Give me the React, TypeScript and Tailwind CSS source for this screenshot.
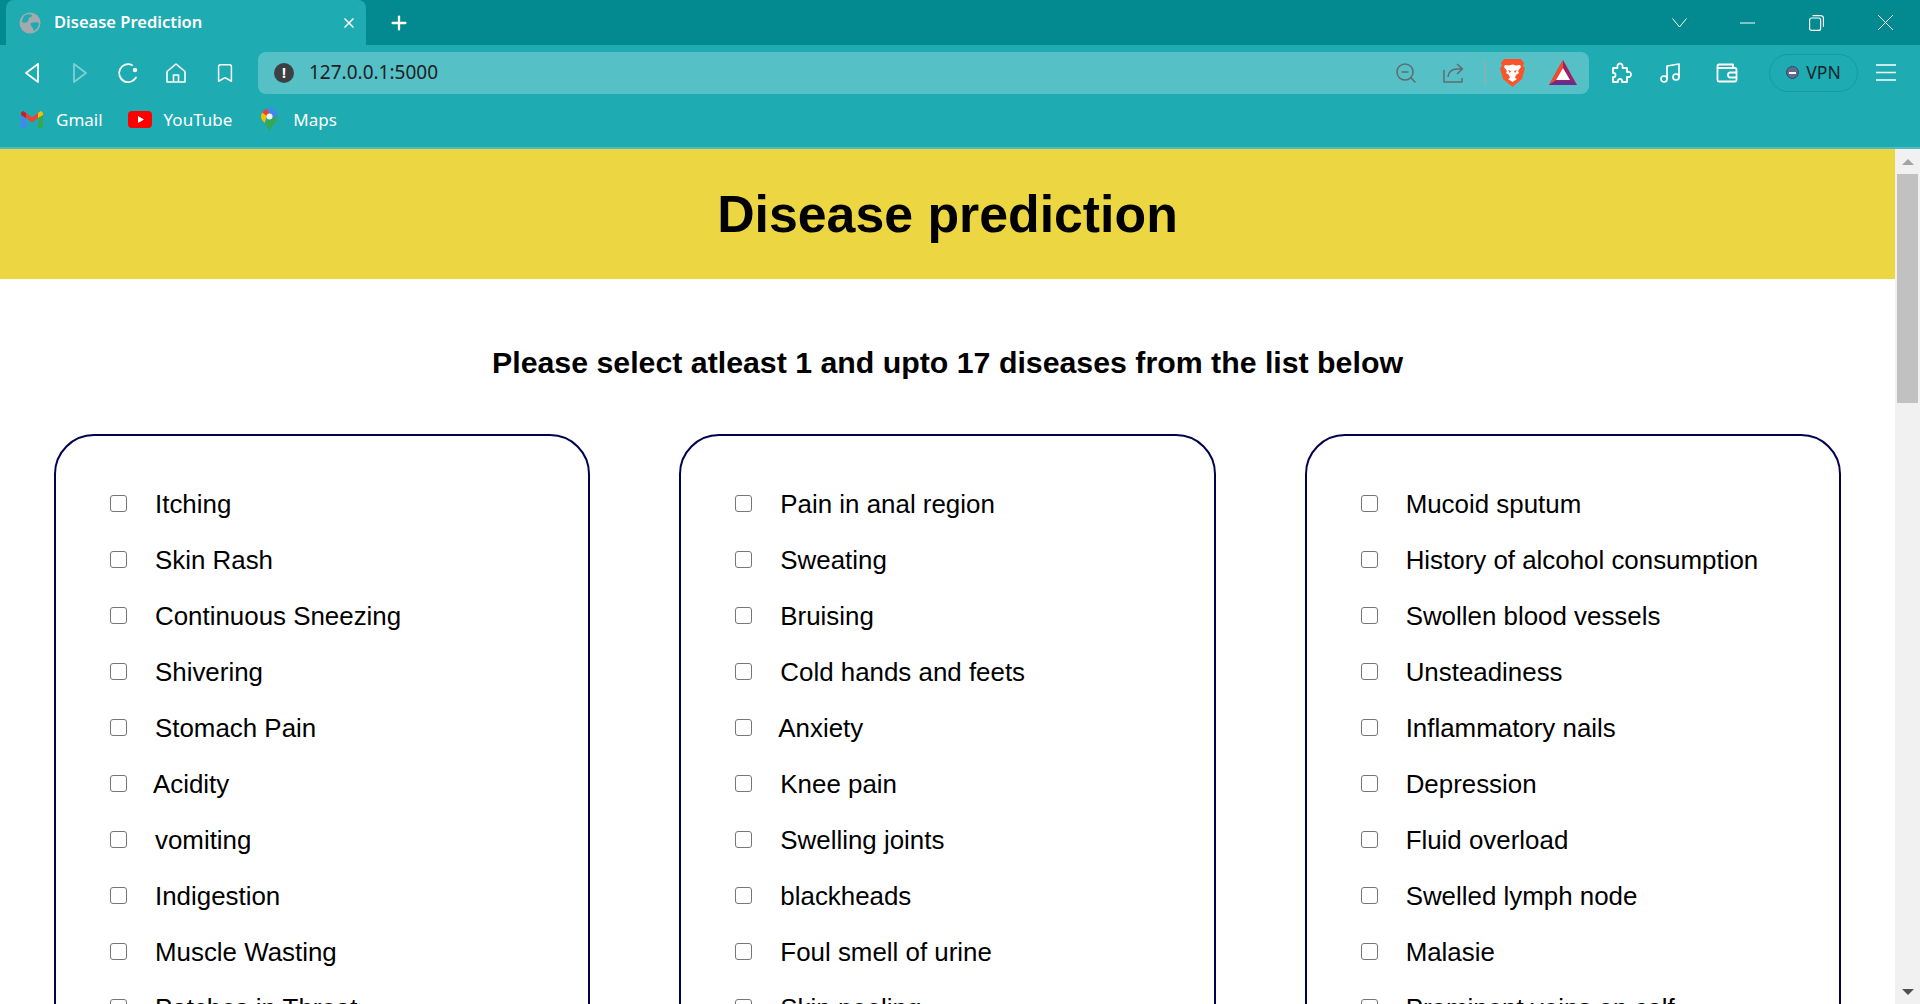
import React from "react";
import { Bookmark, Music, Plus, X, ZoomOut } from "lucide-react";

type Symptom = { label: string; nudge?: boolean };

const columns: Symptom[][] = [
  [
    { label: "Itching" },
    { label: "Skin Rash" },
    { label: "Continuous Sneezing" },
    { label: "Shivering" },
    { label: "Stomach Pain" },
    { label: "Acidity", nudge: true },
    { label: "vomiting" },
    { label: "Indigestion" },
    { label: "Muscle Wasting" },
    { label: "Patches in Throat" },
  ],
  [
    { label: "Pain in anal region" },
    { label: "Sweating" },
    { label: "Bruising" },
    { label: "Cold hands and feets" },
    { label: "Anxiety", nudge: true },
    { label: "Knee pain" },
    { label: "Swelling joints" },
    { label: "blackheads" },
    { label: "Foul smell of urine" },
    { label: "Skin peeling" },
  ],
  [
    { label: "Mucoid sputum" },
    { label: "History of alcohol consumption" },
    { label: "Swollen blood vessels" },
    { label: "Unsteadiness" },
    { label: "Inflammatory nails" },
    { label: "Depression" },
    { label: "Fluid overload" },
    { label: "Swelled lymph node" },
    { label: "Malasie" },
    { label: "Prominent veins on calf" },
  ],
];

function GlobeIcon() {
  return (
    <svg width="22" height="22" viewBox="0 0 22 22">
      <circle cx="11" cy="11" r="10.5" fill="#a3a9ae" />
      <path d="M5 4c3-2 6-2 8-1 0 2-2 2-3 3s0 3-2 4-3 1-5 0c0-2 1-4 2-6zM12 11c3-1 6-1 8 0 0 3-2 6-5 8-1-2-1-3-2-4s-2-3-1-4z" fill="#1eabb2" />
    </svg>
  );
}

function GmailIcon() {
  return (
    <svg width="22" height="17" viewBox="0 0 22 17">
      <path d="M0 3v12.5A1.5 1.5 0 0 0 1.500 17H5V7z" fill="#4285f4" />
      <path d="M17 7v10h3.500a1.500 1.500 0 0 0 1.500-1.500V3z" fill="#34a853" />
      <path d="M5 7V2l6 4.500L17 2v5l-6 4.500z" fill="#ea4335" />
      <path d="M0 3v1l5 3V2L3 .6C1.500-.5 0 .8 0 3z" fill="#c5221f" />
      <path d="M17 2v5l5-3V3c0-2.200-1.500-3.500-3-2.400z" fill="#fbbc04" />
    </svg>
  );
}

function YoutubeIcon() {
  return (
    <svg width="24" height="17" viewBox="0 0 24 17">
      <rect width="24" height="17" rx="4" fill="#ff0000" />
      <path d="M10 5l6 3.500-6 3.500z" fill="#fff" />
    </svg>
  );
}

function MapsIcon() {
  return (
    <svg width="17" height="24" viewBox="0 0 17 24">
      <path d="M8.500 24c-1-4-3-6-5-9l5-4 8-4c.800 3-.500 5.500-2 7.500-2.500 3-5 5-6 9.500z" fill="#34a853" />
      <path d="M3.500 15C1.500 12.500 0 11 0 8.500c0-1.500.500-3 1.500-4L6 8z" fill="#fbbc04" />
      <path d="M1.500 4.500L6 8l3-3.500-4-3.800C3.500 1.500 2.300 3 1.500 4.500z" fill="#ea4335" />
      <path d="M5 .7C6 .2 7.200 0 8.500 0 10 0 12 .6 13.500 2L9 5z" fill="#4285f4" />
      <path d="M13.500 2c1.500 1.300 2.700 3.200 3 5l-5 4c1-2 0-4-2.500-6z" fill="#4285f4" />
      <circle cx="8.500" cy="8.500" r="3" fill="#fff" opacity="0.9" />
    </svg>
  );
}

function BraveIcon() {
  return (
    <svg width="25" height="28" viewBox="0 0 25 28">
      <path d="M4 0h17l3 4-1 3 2 2-3 11-6 5-3.500 3-3.500-3-6-5L0 9l2-2-1-3z" fill="#fb542b" />
      <path d="M5 6l4 .500 3.500-1 3.500 1 4-.500 1 2-3 4 1 2-3 2-1 3 2 1-4.500 3-4.500-3 2-1-1-3-3-2 1-2-3-4z" fill="#fff" />
      <path d="M8 11l3 1-1 2zM17 11l-3 1 1 2z" fill="#fb542b" />
    </svg>
  );
}

function BatIcon() {
  return (
    <svg width="28" height="25" viewBox="0 0 28 25">
      <path d="M14 0l14 25H0z" fill="#9e1f63" />
      <path d="M14 0v8l-8 13-6 4z" fill="#ff4724" />
      <path d="M0 25l6-4h16l6 4z" fill="#662d91" />
      <path d="M14 8l7 12H7z" fill="#fff" />
    </svg>
  );
}

function ReloadIcon() {
  return (
    <svg width="22" height="22" viewBox="0 0 22 22" fill="none" stroke="#fff" strokeWidth="1.800">
      <path d="M19 15.500A9 9 0 1 1 15 3" strokeLinecap="round" />
      <circle cx="18" cy="8" r="2.200" fill="#fff" stroke="none" />
    </svg>
  );
}

function HomeIcon() {
  return (
    <svg width="22" height="22" viewBox="0 0 22 22" fill="none" stroke="#fff" strokeWidth="1.600" strokeLinejoin="round">
      <path d="M2 9.500L11 2l9 7.500V20H2z" />
      <path d="M8.500 20v-7h5v7" />
    </svg>
  );
}

function ShareIcon() {
  return (
    <svg width="22" height="22" viewBox="0 0 22 22" fill="none" stroke="#5f6b6e" strokeWidth="1.500" strokeLinejoin="round">
      <path d="M2 8v12h18v-4" />
      <path d="M6 15c0-5 4-8 9-8h5M15 2l5.500 5-5.500 5" />
    </svg>
  );
}

function PuzzleIcon() {
  return (
    <svg width="22" height="22" viewBox="0 0 22 22" fill="none" stroke="#fff" strokeWidth="1.800" strokeLinejoin="round">
      <path d="M3 6h4.500C7 3 8 1.500 10 1.500S13 3 12.500 6H17v4c2.500-.5 4 .5 4 2.500S19.500 15.500 17 15v5h-5c.5-2-.5-3-2-3s-2.500 1-2 3H3v-5c2 .5 2.500-.5 2.500-2S4.500 10.500 3 11z" />
    </svg>
  );
}

function WalletIcon() {
  return (
    <svg width="22" height="20" viewBox="0 0 22 20" fill="none" stroke="#fff" strokeWidth="1.800" strokeLinejoin="round">
      <path d="M1.500 5V17a1.500 1.500 0 0 0 1.500 1.500h16a1.500 1.500 0 0 0 1.500-1.500V6.500A1.500 1.500 0 0 0 19 5H1.500zM1.500 5V3A1.500 1.500 0 0 1 3 1.500h14V5" />
      <path d="M20.500 9.500H14.500a1.500 1.500 0 0 0 0 5H20.500" />
    </svg>
  );
}

function HamburgerIcon() {
  return (
    <svg width="20" height="17" viewBox="0 0 20 17" stroke="#fff" strokeWidth="1.500">
      <path d="M0 1h20M0 8.500h20M0 16h20" />
    </svg>
  );
}

function WindowControls() {
  return (
    <div className="ml-auto flex items-center">
      <svg width="15" height="10" viewBox="0 0 15 10" fill="none" stroke="#fff" strokeWidth="1" className="mr-[53px]">
        <path d="M.5 .5L7.500 9l7-8.500" />
      </svg>
      <svg width="15" height="2" viewBox="0 0 15 2" stroke="#fff" strokeWidth="1" className="mr-[54px]">
        <path d="M0 1h15" />
      </svg>
      <svg width="15" height="16" viewBox="0 0 15 16" fill="none" stroke="#fff" strokeWidth="1.200" className="mr-[54px]">
        <rect x=".6" y="3" width="11" height="12.400" rx="2" />
        <path d="M3.500 .7h8a3 3 0 0 1 3 3v8" />
      </svg>
      <svg width="15" height="15" viewBox="0 0 15 15" stroke="#fff" strokeWidth="1" className="mr-[27px]">
        <path d="M0 0l15 15M15 0L0 15" />
      </svg>
    </div>
  );
}

function ToolButton({ className, children }: { className?: string; children: React.ReactNode }) {
  return <div className={`w-[48px] h-[48px] flex items-center justify-center shrink-0 ${className ?? ""}`}>{children}</div>;
}

function BookmarkItem({ icon, label, className }: { icon: React.ReactNode; label: string; className?: string }) {
  return (
    <div className={`flex items-center shrink-0 ${className ?? ""}`}>
      <div className="w-[24px] flex justify-center">{icon}</div>
      <span className="ml-[12px] text-[17px] text-white">{label}</span>
    </div>
  );
}

function BrowserChrome() {
  return (
    <header className="shrink-0 font-['Noto_Sans',sans-serif]">
      <div className="h-[45px] bg-[#038a90] flex text-white">
        <div className="ml-[6px] w-[360px] h-[45px] bg-[#1eabb2] rounded-t-lg flex items-center pl-[13px] pr-[9px]">
          <GlobeIcon />
          <span className="ml-[13px] text-[16.500px] font-semibold flex-1">Disease Prediction</span>
          <X size={16} strokeWidth={2.500} />
        </div>
        <div className="ml-[22px] flex items-center">
          <Plus size={22} strokeWidth={2.500} />
        </div>
        <WindowControls />
      </div>
      <div className="h-[55px] bg-[#1eabb2] flex items-center pl-[8px] text-white">
        <ToolButton>
          <svg width="16" height="22" viewBox="0 0 16 22" fill="none" stroke="#fff" strokeWidth="1.800" strokeLinejoin="round">
            <path d="M14 2L2 11l12 9z" />
          </svg>
        </ToolButton>
        <ToolButton>
          <svg width="16" height="22" viewBox="0 0 16 22" fill="none" stroke="#7fd0d4" strokeWidth="1.800" strokeLinejoin="round">
            <path d="M2 2l12 9-12 9z" />
          </svg>
        </ToolButton>
        <ToolButton>
          <ReloadIcon />
        </ToolButton>
        <ToolButton>
          <HomeIcon />
        </ToolButton>
        <ToolButton className="ml-[1px]">
          <Bookmark size={22} strokeWidth={1.600} />
        </ToolButton>
        <div className="ml-[9px] w-[1331px] h-[42px] bg-[#55c1c6] rounded-lg flex items-center pl-[16px] text-[#202124] shrink-0">
          <div className="w-[20px] h-[20px] rounded-full bg-[#3c4043] text-white text-[14px] font-bold flex items-center justify-center leading-none">!</div>
          <span className="ml-[15px] text-[19px]">127.0.0.1:5000</span>
          <div className="ml-auto flex items-center text-[#5f6b6e]">
            <ZoomOut size={24} strokeWidth={1.500} />
            <div className="ml-[24px]"><ShareIcon /></div>
            <div className="ml-[20px] w-[2px] h-[24px] bg-[#7fb3b7]" />
            <div className="ml-[14px]"><BraveIcon /></div>
            <div className="ml-[24px] mr-[12px]"><BatIcon /></div>
          </div>
        </div>
        <ToolButton className="ml-[8px]">
          <PuzzleIcon />
        </ToolButton>
        <ToolButton className="ml-[1px]">
          <Music size={24} strokeWidth={1.700} />
        </ToolButton>
        <ToolButton className="ml-[9px]">
          <WalletIcon />
        </ToolButton>
        <div className="ml-[18px] w-[89px] h-[38px] rounded-full border border-[#189aa1] flex items-center justify-center shrink-0 text-[#12282c] text-[17.500px]">
          <div className="w-[13px] h-[13px] rounded-full bg-[#5f6b8c] border border-[#2d4a6e] flex items-center justify-center mr-[7px]">
            <div className="w-[7px] h-[2px] bg-white" />
          </div>
          VPN
        </div>
        <ToolButton className="ml-[4px]">
          <HamburgerIcon />
        </ToolButton>
      </div>
      <div className="h-[47px] bg-[#1eabb2] flex items-center pl-[20px] pb-[8px]">
        <BookmarkItem icon={<GmailIcon />} label="Gmail" />
        <BookmarkItem icon={<YoutubeIcon />} label="YouTube" className="ml-[25px]" />
        <BookmarkItem icon={<MapsIcon />} label="Maps" className="ml-[25px]" />
      </div>
      <div className="h-[2px] bg-[#4cbcc2]" />
    </header>
  );
}

function SymptomPanel({ items }: { items: Symptom[] }) {
  return (
    <div className="border-2 border-[#02024f] rounded-[40px] pt-[40px] pl-[54px] pb-[40px]">
      {items.map((item) => (
        <label key={item.label} className="h-[56px] flex items-center">
          <input type="checkbox" className="appearance-none w-[17px] h-[17px] mb-[2px] shrink-0 bg-white border-[1.500px] border-[#767676] rounded-[3px]" />
          <span className={`${item.nudge ? "ml-[26px]" : "ml-[28px]"} text-[25.900px] text-black`}>{item.label}</span>
        </label>
      ))}
    </div>
  );
}

function Scrollbar() {
  return (
    <div className="w-[25px] shrink-0 bg-[#f1f1f1] flex flex-col items-center">
      <div className="h-[25px] flex items-center justify-center">
        <div className="w-0 h-0 border-x-[6px] border-x-transparent border-b-[6px] border-b-[#a3a3a3]" />
      </div>
      <div className="w-[21px] h-[229px] bg-[#c1c1c1]" />
      <div className="mt-auto h-[25px] flex items-center justify-center">
        <div className="w-0 h-0 border-x-[6px] border-x-transparent border-t-[6px] border-t-[#505050]" />
      </div>
    </div>
  );
}

export default function App() {
  return (
    <section className="h-screen flex flex-col overflow-hidden bg-white">
      <BrowserChrome />
      <div className="flex-1 flex min-h-0">
        <main className="flex-1 min-w-0 overflow-hidden font-['Liberation_Sans',Arial,sans-serif]">
          <div className="h-[130px] pt-[1px] bg-[#ecd641] flex items-center justify-center">
            <h1 className="text-[51.800px] font-bold text-black">Disease prediction</h1>
          </div>
          <h2 className="mt-[66px] h-[36px] leading-[36px] text-center text-[30.300px] font-bold text-black">
            Please select atleast 1 and upto 17 diseases from the list below
          </h2>
          <div className="mt-[53px] px-[54px] grid grid-cols-3 gap-x-[89px]">
            {columns.map((items, i) => (
              <SymptomPanel key={i} items={items} />
            ))}
          </div>
        </main>
        <Scrollbar />
      </div>
    </section>
  );
}
